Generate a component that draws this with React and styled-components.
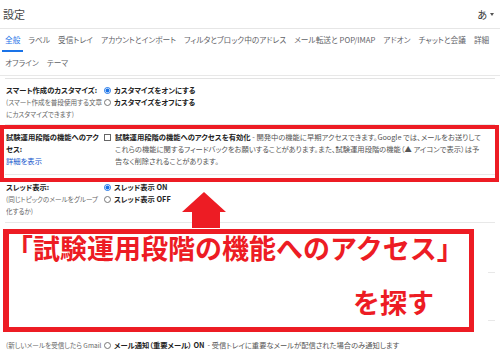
import styled, { createGlobalStyle } from "styled-components";

const RED = "#ed1c24";

const GlobalStyle = createGlobalStyle`
  html, body {
    margin: 0;
    padding: 0;
    background: #fff;
  }
  body {
    font-family: "Noto Sans CJK JP", "Noto Sans", sans-serif;
    color: #222;
    overflow: hidden;
  }
`;

const Page = styled.div`
  position: relative;
  width: 500px;
  height: 350px;
  overflow: hidden;
  font-feature-settings: "palt";
`;

const Header = styled.header`
  display: flex;
  align-items: center;
  justify-content: space-between;
  height: 29px;
  box-sizing: border-box;
  padding: 0 6px 0 3px;
  border-bottom: 1px solid #e6e6e6;
`;

const Title = styled.h1`
  margin: 0;
  font-size: 11px;
  font-weight: normal;
  line-height: 1;
  color: #444;
`;

const Lang = styled.span`
  display: flex;
  align-items: center;
  gap: 3px;
  font-size: 10px;
  color: #333;
  &::after {
    content: "";
    border-left: 2px solid transparent;
    border-right: 2px solid transparent;
    border-top: 3px solid #555;
  }
`;

const TabRow = styled.nav`
  display: flex;
  gap: 2px;
  height: ${(p) => (p.$last ? "24px" : "23px")};
  box-sizing: border-box;
  padding-left: 2px;
  border-bottom: ${(p) => (p.$last ? "1px solid #e8e8e8" : "none")};
`;

const Tab = styled.span`
  display: flex;
  align-items: center;
  padding: 0 3px;
  font-size: 7.7px;
  white-space: nowrap;
  color: ${(p) => (p.$active ? "#1a73e8" : "#5f6368")};
  border-bottom: 2px solid ${(p) => (p.$active ? "#1a73e8" : "transparent")};
`;

const Settings = styled.section`
  margin: 2px 5px 0;
  border-top: 1px solid #e3e3e3;
`;

const Row = styled.div`
  display: grid;
  grid-template-columns: 98px 1fr;
  padding: ${(p) => p.$pad || "6px 0 6px"};
  padding-left: 1px;
  border-bottom: 1px solid #e8e8e8;
  font-size: 7.3px;
  line-height: 12px;
  white-space: nowrap;
`;

const Label = styled.div`
  display: flex;
  flex-direction: column;
  overflow: hidden;
`;

const LabelTitle = styled.span`
  font-weight: bold;
  color: #222;
`;

const Sub = styled.span`
  font-size: 6.6px;
  color: #666;
`;

const More = styled.span`
  color: #1155cc;
`;

const Options = styled.div`
  display: flex;
  flex-direction: column;
`;

const Option = styled.label`
  display: flex;
  align-items: center;
  gap: 3px;
  font-weight: bold;
  color: #222;
`;

const Note = styled.span`
  font-weight: normal;
  color: #555;
`;

const Radio = styled.span`
  flex-shrink: 0;
  width: 7px;
  height: 7px;
  border-radius: 50%;
  box-sizing: border-box;
  border: 1px solid ${(p) => (p.$checked ? "#1a73e8" : "#777")};
  background: ${(p) =>
    p.$checked ? "radial-gradient(circle, #1a73e8 0 1.8px, #fff 2.2px)" : "#fff"};
`;

const Checkbox = styled.span`
  flex-shrink: 0;
  width: 7px;
  height: 7px;
  box-sizing: border-box;
  border: 1px solid #666;
  margin-top: 3px;
`;

const Feature = styled.div`
  display: flex;
  align-items: flex-start;
  gap: 4px;
`;

const Desc = styled.div`
  display: flex;
  flex-direction: column;
  color: #555;
`;

const Highlight = styled.div`
  position: absolute;
  left: 0;
  top: 125px;
  width: 499px;
  height: 57px;
  box-sizing: border-box;
  border: 4px solid ${RED};
`;

const Arrow = styled.svg`
  position: absolute;
  left: 182px;
  top: 192px;
`;

const Callout = styled.div`
  position: absolute;
  left: 3px;
  top: 229px;
  width: 471px;
  height: 103px;
  box-sizing: border-box;
  border: 5px solid ${RED};
  border-left-width: 6px;
  background: #fff;
  box-shadow: 14px 6px 0 #fff, 0 6px 0 #fff;
  color: ${RED};
  font-weight: bold;
  font-size: 27px;
  line-height: 27px;
  font-feature-settings: normal;
`;

const CalloutTitle = styled.div`
  margin-left: -3px;
  white-space: nowrap;
`;

const CalloutAction = styled.div`
  margin-top: 27px;
  padding-right: 35px;
  text-align: right;
`;

export default function App() {
  return (
    <Page>
      <GlobalStyle />
      <Header>
        <Title>設定</Title>
        <Lang>あ</Lang>
      </Header>

      <TabRow>
        <Tab $active>全般</Tab>
        <Tab>ラベル</Tab>
        <Tab>受信トレイ</Tab>
        <Tab>アカウントとインポート</Tab>
        <Tab>フィルタとブロック中のアドレス</Tab>
        <Tab>メール転送と POP/IMAP</Tab>
        <Tab>アドオン</Tab>
        <Tab>チャットと会議</Tab>
        <Tab>詳細</Tab>
      </TabRow>
      <TabRow $last>
        <Tab>オフライン</Tab>
        <Tab>テーマ</Tab>
      </TabRow>

      <Settings>
        <Row $pad="5px 0 4px">
          <Label>
            <LabelTitle>スマート作成のカスタマイズ:</LabelTitle>
            <Sub>(スマート作成を普段使用する文章</Sub>
            <Sub>にカスタマイズできます)</Sub>
          </Label>
          <Options>
            <Option><Radio $checked />カスタマイズをオンにする</Option>
            <Option><Radio />カスタマイズをオフにする</Option>
          </Options>
        </Row>

        <Row $pad="6px 0 7px">
          <Label>
            <LabelTitle>試験運用段階の機能へのアク</LabelTitle>
            <LabelTitle>セス:</LabelTitle>
            <More>詳細を表示</More>
          </Label>
          <Feature>
            <Checkbox />
            <Desc>
              <span>
                <LabelTitle>試験運用段階の機能へのアクセスを有効化</LabelTitle>
                {" - 開発中の機能に早期アクセスできます。Google では、メールをお送りして"}
              </span>
              <span>これらの機能に関するフィードバックをお願いすることがあります。また、試験運用段階の機能（▲ アイコンで表示）は予</span>
              <span>告なく削除されることがあります。</span>
            </Desc>
          </Feature>
        </Row>

        <Row $pad="6px 0 5px">
          <Label>
            <LabelTitle>スレッド表示:</LabelTitle>
            <Sub>(同じトピックのメールをグループ</Sub>
            <Sub>化するか)</Sub>
          </Label>
          <Options>
            <Option><Radio $checked />スレッド表示 ON</Option>
            <Option><Radio />スレッド表示 OFF</Option>
          </Options>
        </Row>

        <Row $pad="6px 0 7px">
          <Label>
            <LabelTitle>ナッジ:</LabelTitle>
            <More>詳細</More>
          </Label>
          <Options>
            <Option>返信を提案する</Option>
            <Option>フォローアップを提案する</Option>
            <Sub>&nbsp;</Sub>
          </Options>
        </Row>

        <Row $pad="6px 0 5px">
          <Label>
            <LabelTitle>スマートリプライ:</LabelTitle>
            <Sub>(候補の返信文を表示する)</Sub>
            <Sub>&nbsp;</Sub>
          </Label>
          <Options>
            <Option><Radio $checked />スマートリプライ ON</Option>
            <Option><Radio />スマートリプライ OFF</Option>
          </Options>
        </Row>

        <Row>
          <Label>
            <LabelTitle>デスクトップ通知:</LabelTitle>
            <Sub>(新しいメールを受信したら Gmail</Sub>
          </Label>
          <Options>
            <Option>
              <Radio />新着メール通知 ON<Note> - 新しいメールが受信トレイに配信されたら通知します</Note>
            </Option>
            <Option>
              <Radio />メール通知（重要メール） ON<Note> - 受信トレイに重要なメールが配信された場合のみ通知します</Note>
            </Option>
          </Options>
        </Row>
      </Settings>

      <Highlight />

      <Arrow width="44" height="36" viewBox="0 0 44 36">
        <polygon points="22,0 44,20 38,20 38,36 10,36 10,20 0,20" fill={RED} />
      </Arrow>

      <Callout>
        <CalloutTitle>「試験運用段階の機能へのアクセス」</CalloutTitle>
        <CalloutAction>を探す</CalloutAction>
      </Callout>
    </Page>
  );
}
